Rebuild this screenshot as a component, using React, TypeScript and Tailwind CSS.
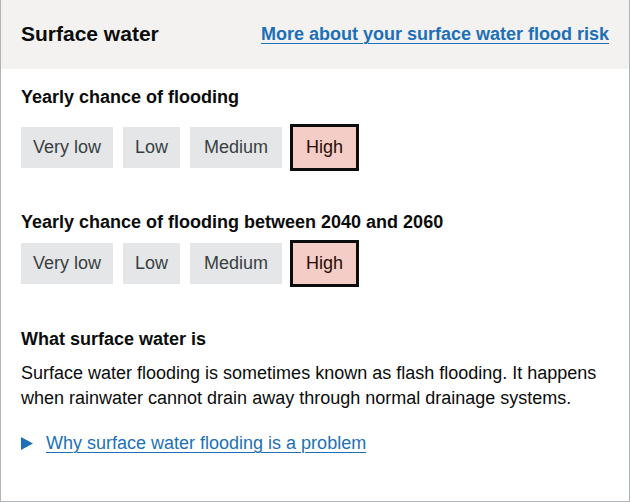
const levels = ['Very low', 'Low', 'Medium', 'High'];

function RiskTags() {
  return (
    <div className="flex items-center gap-[10px]">
      {levels.map((level) => {
        const active = level === 'High';
        const pad = level === 'Medium' ? 'px-[14px]' : 'px-[12px]';
        return (
          <span
            key={level}
            className={
              active
                ? 'px-[13px] ml-[1px] h-[41px] flex items-center outline-[3px] outline-solid outline-[#0b0c0c] bg-[#f4cdc6] text-[#2a0b06]'
                : `${pad} h-[41px] flex items-center bg-[#e5e6e7] text-[#383f43]`
            }
          >
            {level}
          </span>
        );
      })}
    </div>
  );
}

export default function App() {
  return (
    <div
      className="w-[630px] h-[502px] bg-white text-[#0b0c0c] text-[18px] leading-[25px]"
      style={{ fontFamily: '"Liberation Sans", Arial, sans-serif' }}
    >
      <div className="h-full border border-t-0 border-[#b1b4b6] flex flex-col">
        {/* Header */}
        <div className="h-[69px] bg-[#f3f2f1] flex items-center justify-between pl-[20px] pr-[20px]">
          <h2 className="text-[21px] font-bold -mt-[2px]">Surface water</h2>
          <a href="#" className="text-[#1d70b8] font-bold underline underline-offset-[3px] decoration-1">
            More about your surface water flood risk
          </a>
        </div>

        {/* Body */}
        <div className="px-[20px] pt-[16px]">
          <h3 className="font-bold mb-[17px]">Yearly chance of flooding</h3>
          <RiskTags />

          <h3 className="font-bold mt-[42px] mb-[8px]">
            Yearly chance of flooding between 2040 and 2060
          </h3>
          <RiskTags />

          <h3 className="font-bold mt-[43px] mb-[9px]">What surface water is</h3>
          <p>
            Surface water flooding is sometimes known as flash flooding. It happens when rainwater
            cannot drain away through normal drainage systems.
          </p>

          <div className="mt-[20px] flex items-center gap-[13px]">
            <svg width="12" height="13" viewBox="0 0 12 13" className="fill-[#1d70b8]">
              <path d="M0 0 L12 6.5 L0 13 Z" />
            </svg>
            <a href="#" className="text-[#1d70b8] underline underline-offset-[3px] decoration-1">
              Why surface water flooding is a problem
            </a>
          </div>
        </div>
      </div>
    </div>
  );
}
